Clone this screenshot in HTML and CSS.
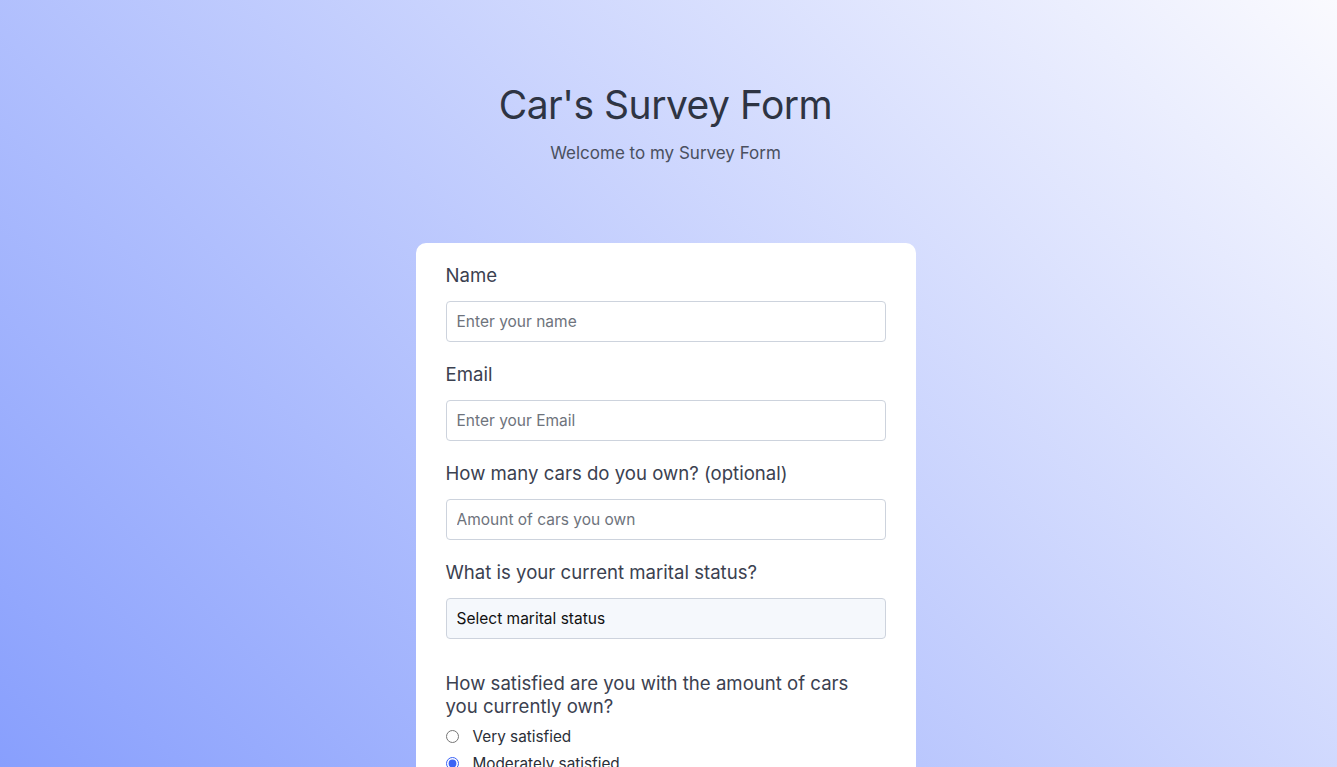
FILE: index.html
```html
<!DOCTYPE html>
<html lang="en">
<head>
<meta charset="utf-8">
<title>Car's Survey Form</title>
<link rel="stylesheet" href="styles.css">
</head>
<body>
<div class="page">
  <header class="header">
    <h1 class="title">Car's Survey Form</h1>
    <p class="subtitle">Welcome to my Survey Form</p>
  </header>
  <form class="card">
    <div class="group">
      <label class="label" for="name">Name</label>
      <input class="field" id="name" type="text" placeholder="Enter your name">
    </div>
    <div class="group">
      <label class="label" for="email">Email</label>
      <input class="field" id="email" type="email" placeholder="Enter your Email">
    </div>
    <div class="group">
      <label class="label" for="cars">How many cars do you own? (optional)</label>
      <input class="field" id="cars" type="number" placeholder="Amount of cars you own">
    </div>
    <div class="group">
      <label class="label" for="status">What is your current marital status?</label>
      <select class="field select" id="status">
        <option>Select marital status</option>
        <option>Single</option>
        <option>Married</option>
      </select>
    </div>
    <div class="group radios">
      <p class="label question">How satisfied are you with the amount of cars you currently own?</p>
      <label class="radio-row"><input type="radio" name="sat" class="radio"> <span>Very satisfied</span></label>
      <label class="radio-row"><input type="radio" name="sat" class="radio" checked> <span>Moderately satisfied</span></label>
      <label class="radio-row"><input type="radio" name="sat" class="radio"> <span>Not satisfied</span></label>
    </div>
  </form>
</div>
</body>
</html>
```
FILE: styles.css
```css
html, body {
  margin: 0;
  padding: 0;
}
body {
  min-height: 100vh;
  background: linear-gradient(45deg, #889ffd 0%, #fafafe 100%) fixed;
  font-family: Inter, "Noto Sans", sans-serif;
  color: #3b4150;
}
.page {
  display: flex;
  flex-direction: column;
  align-items: center;
  padding-right: 6px;
}
.header {
  text-align: center;
  padding-top: 80px;
}
.title {
  margin: 0;
  font-size: 39px;
  line-height: 50px;
  font-weight: 400;
  color: #2e3443;
  letter-spacing: -0.5px;
}
.subtitle {
  margin: 12px 0 0;
  font-size: 17px;
  line-height: 22px;
  color: #4a5060;
}
.card {
  margin-top: 79px;
  width: 500px;
  box-sizing: border-box;
  background: #fff;
  border-radius: 10px;
  padding: 21px 30px 30px;
}
.group {
  display: flex;
  flex-direction: column;
  margin-bottom: 21px;
}
.label {
  font-size: 18.6px;
  line-height: 22px;
  color: #3b4150;
  margin: 0 0 15px;
}
.field {
  box-sizing: border-box;
  height: 41px;
  width: 100%;
  border: 1px solid #cdd3dd;
  border-radius: 4px;
  padding: 0 10px;
  font-family: inherit;
  font-size: 15.5px;
  color: #222;
  background: #fff;
  outline: none;
}
.field::placeholder {
  color: #6e737c;
}
.select {
  appearance: none;
  -webkit-appearance: none;
  background: #f5f8fc;
  color: #111;
}
.radios {
  margin-top: 33px;
}
.question {
  line-height: 23px;
  margin-bottom: 5px;
}
.radio-row {
  display: flex;
  align-items: center;
  height: 27px;
  font-size: 15.3px;
  color: #2b2f38;
}
.radio {
  margin: 0 14px 0 0;
  width: 13px;
  height: 13px;
  accent-color: #3b63f5;
}
```
